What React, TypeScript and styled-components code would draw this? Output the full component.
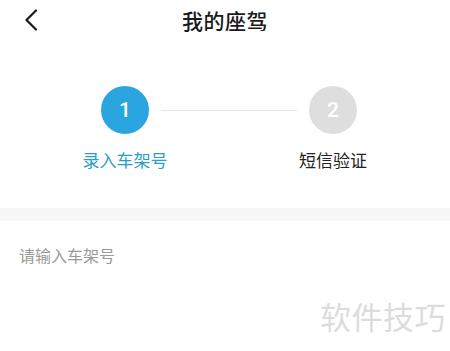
import React from "react";
import styled, { createGlobalStyle } from "styled-components";

const Global = createGlobalStyle`
  html, body { margin: 0; padding: 0; background: #ffffff; }
  body { font-family: "Noto Sans CJK SC", "Noto Sans", sans-serif; }
`;

const Page = styled.div`
  position: relative;
  width: 450px;
  height: 351px;
  overflow: hidden;
  background: #ffffff;
`;

const Header = styled.div`
  height: 40px;
  display: flex;
  align-items: center;
  justify-content: center;
  position: relative;
`;

const BackButton = styled.div`
  position: absolute;
  left: 22px;
  top: 8px;
  width: 18px;
  height: 24px;
  display: flex;
  align-items: center;
  justify-content: center;
`;

const Title = styled.div`
  font-size: 21px;
  line-height: 40px;
  font-weight: 500;
  color: #1a1a1a;
  letter-spacing: 0.5px;
`;

const Steps = styled.div`
  display: grid;
  grid-template-columns: 120px 1fr 120px;
  padding: 46px 57px 36px 65px;
`;

const Step = styled.div`
  display: flex;
  flex-direction: column;
  align-items: center;
`;

const Circle = styled.div<{ $active?: boolean }>`
  width: 48px;
  height: 48px;
  border-radius: 50%;
  background: ${(p) => (p.$active ? "#2aa5df" : "#dedede")};
  color: #ffffff;
  display: flex;
  align-items: center;
  justify-content: center;
  font-family: "Roboto", "Noto Sans", sans-serif;
  font-size: 21px;
  font-weight: 500;
`;

const StepLabel = styled.div<{ $active?: boolean }>`
  margin-top: 14px;
  font-size: 17px;
  line-height: 24px;
  color: ${(p) => (p.$active ? "#2a9ec6" : "#222222")};
  white-space: nowrap;
`;

const Connector = styled.div`
  height: 1px;
  background: #e6e6e6;
  margin: 24px -24px 0 -24px;
`;

const Divider = styled.div`
  height: 13px;
  background: #f7f7f7;
`;

const InputRow = styled.div`
  padding: 22px 19px 0 19px;
`;

const Placeholder = styled.div`
  font-size: 16px;
  line-height: 24px;
  color: #9a9a9a;
`;

const Watermark = styled.div`
  position: absolute;
  left: 320px;
  top: 296px;
  font-size: 31px;
  line-height: 40px;
  color: #dcdcdc;
  letter-spacing: 0.5px;
`;

export default function App() {
  return (
    <Page>
      <Global />
      <Header>
        <BackButton>
          <svg width="14" height="22" viewBox="0 0 14 22" fill="none">
            <path d="M12 1.5 L2.5 11 L12 20.5" stroke="#1a1a1a" strokeWidth="2.2" strokeLinecap="round" strokeLinejoin="round" />
          </svg>
        </BackButton>
        <Title>我的座驾</Title>
      </Header>
      <Steps>
        <Step>
          <Circle $active>1</Circle>
          <StepLabel $active>录入车架号</StepLabel>
        </Step>
        <Connector />
        <Step>
          <Circle>2</Circle>
          <StepLabel>短信验证</StepLabel>
        </Step>
      </Steps>
      <Divider />
      <InputRow>
        <Placeholder>请输入车架号</Placeholder>
      </InputRow>
      <Watermark>软件技巧</Watermark>
    </Page>
  );
}
